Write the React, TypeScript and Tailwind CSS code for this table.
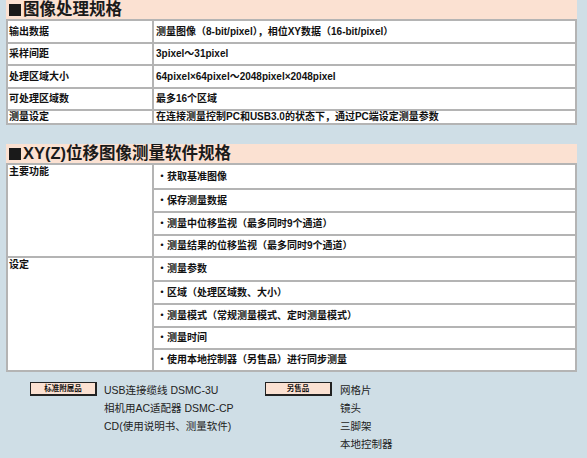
const font = { fontFamily: '"Liberation Sans", "Noto Sans CJK SC", sans-serif' };

const spec = [
  { label: "输出数据", value: "测量图像（8-bit/pixel），相位XY数据（16-bit/pixel）", h: "h-[23px]" },
  { label: "采样间距", value: "3pixel～31pixel", h: "h-[22px]" },
  { label: "处理区域大小", value: "64pixel×64pixel～2048pixel×2048pixel", h: "h-[23px]" },
  { label: "可处理区域数", value: "最多16个区域", h: "h-[22px]" },
  { label: "测量设定", value: "在连接测量控制PC和USB3.0的状态下，通过PC端设定测量参数", h: "h-[14px]" },
];

const groups = [
  {
    label: "主要功能",
    items: ["获取基准图像", "保存测量数据", "测量中位移监视（最多同时9个通道）", "测量结果的位移监视（最多同时9个通道）"],
    hs: ["h-[23px]", "h-[23px]", "h-[23px]", "h-[22px]"],
  },
  {
    label: "设定",
    items: ["测量参数", "区域（处理区域数、大小）", "测量模式（常规测量模式、定时测量模式）", "测量时间", "使用本地控制器（另售品）进行同步测量"],
    hs: ["h-[22px]", "h-[23px]", "h-[23px]", "h-[22px]", "h-[22px]"],
  },
];

function Title({ text }: { text: string }) {
  return (
    <div className="h-[19px] bg-[#fbe1d2] pl-[3px] flex items-center text-[16.5px] font-bold leading-none text-[#1a1a1a]">
      <span className="inline-block w-[12px] h-[12px] bg-[#1a1a1a] mr-[2px]" />
      {text}
    </div>
  );
}

function Tag({ text }: { text: string }) {
  return (
    <div className="w-[67px] h-[14px] bg-[#fbe1d2] border border-[#222] border-r-2 border-b-2 flex items-center justify-center text-[7.5px] font-bold text-[#111] leading-none">
      {text}
    </div>
  );
}

export default function App() {
  return (
    <div style={font} className="w-[587px] h-[458px] bg-[#cfdee6] overflow-hidden text-[#111]">
      <div className="ml-[6px] w-[571px]">
        <Title text="图像处理规格" />
        <div className="border-l-2 border-r-2 border-b-2 border-[#b4b4b4] bg-white">
          {spec.map((r) => (
            <div key={r.label} className={`flex border-t-2 border-[#b4b4b4] ${r.h}`}>
              <div className="w-[146px] shrink-0 border-r-2 border-[#b4b4b4] pl-[1px] flex items-center text-[10px] font-bold leading-none">
                {r.label}
              </div>
              <div className="flex-1 pl-[2px] flex items-center text-[10px] font-bold leading-none">{r.value}</div>
            </div>
          ))}
        </div>

        <div className="mt-[19px]">
          <Title text="XY(Z)位移图像测量软件规格" />
          <div className="border-l-2 border-r-2 border-b-2 border-[#b4b4b4] bg-white">
            {groups.map((g) => (
              <div key={g.label} className="flex border-t-2 border-[#b4b4b4]">
                <div className="w-[146px] shrink-0 border-r-2 border-[#b4b4b4] pl-[1px] pt-[2px] text-[10px] font-bold leading-none">
                  {g.label}
                </div>
                <div className="flex-1 flex flex-col">
                  {g.items.map((it, i) => (
                    <div
                      key={it}
                      className={`${g.hs[i]} ${i > 0 ? "border-t-2 border-[#b4b4b4]" : ""} pl-[3px] flex items-center text-[10px] font-bold leading-none`}
                    >
                      ・{it}
                    </div>
                  ))}
                </div>
              </div>
            ))}
          </div>
        </div>
      </div>

      <div className="flex mt-[9px] text-[10.5px] text-[#222] leading-[18px]">
        <div className="ml-[30px] pt-[1px]">
          <Tag text="标准附属品" />
        </div>
        <div className="ml-[7px] w-[161px] shrink-0 flex flex-col">
          <span>USB连接缆线 DSMC-3U</span>
          <span>相机用AC适配器 DSMC-CP</span>
          <span>CD(使用说明书、测量软件)</span>
        </div>
        <div className="pt-[1px]">
          <Tag text="另售品" />
        </div>
        <div className="ml-[8px] flex flex-col">
          <span>网格片</span>
          <span>镜头</span>
          <span>三脚架</span>
          <span>本地控制器</span>
        </div>
      </div>
    </div>
  );
}
